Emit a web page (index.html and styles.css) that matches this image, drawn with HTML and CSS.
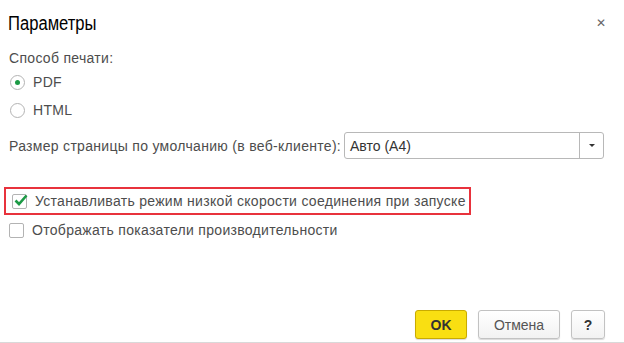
FILE: index.html
```html
<!DOCTYPE html>
<html lang="ru">
<head>
    <meta charset="UTF-8">
    <title>Параметры</title>
    <link rel="stylesheet" href="styles.css">
</head>
<body>
    <div class="dialog">
        <div class="dialog-header">
            <h1>Параметры</h1>
            <span class="close">&#x2715;</span>
        </div>

        <div class="dialog-body">
            <p class="label">Способ печати:</p>
            <label class="radio checked"><span class="radio-dot"></span>PDF</label>
            <label class="radio"><span class="radio-dot"></span>HTML</label>

            <div class="field-row">
                <span class="label">Размер страницы по умолчанию (в веб-клиенте):</span>
                <div class="select">
                    <span class="select-value">Авто (А4)</span>
                    <span class="select-arrow"></span>
                </div>
            </div>

            <div class="checks">
                <label class="check highlight">
                    <span class="box checked">
                        <svg width="14" height="12" viewBox="0 0 14 12"><path d="M1.5 6.5 L5 10 L12.5 1.5" fill="none" stroke="#1c9a45" stroke-width="2.6"/></svg>
                    </span>
                    Устанавливать режим низкой скорости соединения при запуске
                </label>
                <label class="check">
                    <span class="box"></span>
                    Отображать показатели производительности
                </label>
            </div>
        </div>

        <div class="dialog-footer">
            <button class="btn btn-ok">OK</button>
            <button class="btn">Отмена</button>
            <button class="btn btn-help">?</button>
        </div>
    </div>
</body>
</html>
```

FILE: styles.css
```css
body {
    margin: 0;
    background: #ffffff;
    font-family: Arial, "Liberation Sans", sans-serif;
    color: #4d4d4d;
    font-size: 14px;
    letter-spacing: 0.3px;
}

.dialog {
    width: 624px;
    height: 342px;
    border-bottom: 1px solid #d9d9d9;
    display: flex;
    flex-direction: column;
}

.dialog-header {
    display: flex;
    justify-content: space-between;
    align-items: center;
    padding: 9px 18px 0 8px;
    height: 28px;
}

.dialog-header h1 {
    margin: 0;
    font-size: 20px;
    font-weight: normal;
    letter-spacing: 0;
    color: #000000;
    transform: scaleX(0.83);
    transform-origin: left center;
}

.close {
    font-size: 12px;
    color: #666666;
}

.dialog-body {
    padding: 0 20px 0 9px;
    flex: 1;
}

.label {
    margin: 13px 0 0;
    color: #4d4d4d;
}

.radio {
    display: flex;
    align-items: center;
    gap: 8px;
    height: 28px;
    color: #4d4d4d;
}

.radio:first-of-type {
    margin-top: 2px;
}

.radio-dot {
    width: 15px;
    height: 15px;
    border: 1px solid #b3b3b3;
    border-radius: 50%;
    box-sizing: border-box;
    margin-left: 1px;
    display: flex;
    align-items: center;
    justify-content: center;
}

.radio.checked .radio-dot::after {
    content: "";
    width: 5px;
    height: 5px;
    border-radius: 50%;
    background: #1c9a45;
}

.field-row {
    display: flex;
    align-items: center;
    justify-content: space-between;
    margin-top: 8px;
}

.field-row .label {
    margin: 0;
}

.select {
    width: 260px;
    height: 27px;
    border: 1px solid #b8b8b8;
    border-radius: 3px;
    box-sizing: border-box;
    display: flex;
    align-items: center;
}

.select-value {
    flex: 1;
    padding-left: 5px;
    color: #333333;
    letter-spacing: 0;
}

.select-arrow {
    width: 23px;
    height: 100%;
    border-left: 1px solid #b8b8b8;
    position: relative;
}

.select-arrow::after {
    content: "";
    position: absolute;
    left: 9px;
    top: 11px;
    border-left: 3px solid transparent;
    border-right: 3px solid transparent;
    border-top: 3px solid #333333;
}

.checks {
    margin-top: 28px;
}

.check {
    display: flex;
    align-items: center;
    gap: 8px;
    height: 24px;
    color: #4d4d4d;
    width: fit-content;
}

.check.highlight {
    margin-left: -5px;
    padding: 0 3px 0 6px;
    border: 2px solid #e8323c;
}

.check + .check {
    margin-top: 3px;
}

.box {
    width: 15px;
    height: 15px;
    border: 1px solid #b3b3b3;
    border-radius: 2px;
    box-sizing: border-box;
    position: relative;
}

.box svg {
    position: absolute;
    left: 1px;
    top: -1px;
}

.dialog-footer {
    display: flex;
    justify-content: flex-end;
    gap: 11px;
    padding: 0 19px 3px 0;
}

.btn {
    height: 29px;
    min-width: 52px;
    padding: 0 12px;
    font-family: inherit;
    font-size: 14px;
    color: #555555;
    background: linear-gradient(#ffffff, #f2f2f2);
    border: 1px solid #c2c2c2;
    border-radius: 3px;
    box-shadow: 0 1px 1px rgba(0, 0, 0, 0.15);
}

.btn-ok {
    background: #f9df12;
    border-color: #c9ab00;
    color: #333333;
    font-weight: bold;
    width: 52px;
}

.btn:nth-child(2) {
    width: 82px;
}

.btn-help {
    min-width: 34px;
    width: 34px;
    padding: 0;
    font-weight: bold;
    color: #333333;
}
```
